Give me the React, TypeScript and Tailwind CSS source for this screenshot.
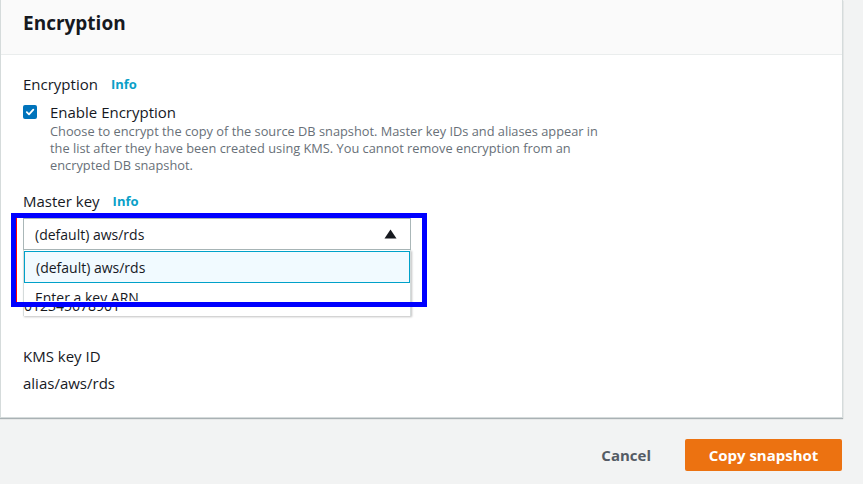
import React from "react";

const font = { fontFamily: '"Open Sans", "Noto Sans", sans-serif' };

function Check() {
  return (
    <span className="flex h-[14px] w-[14px] items-center justify-center rounded-[2px] bg-[#0073bb]">
      <svg width="10" height="10" viewBox="0 0 10 10">
        <path d="M1.8 5.2 L4 7.3 L8.3 2.6" fill="none" stroke="#fff" strokeWidth="1.8" strokeLinecap="round" strokeLinejoin="round" />
      </svg>
    </span>
  );
}

export default function App() {
  return (
    <div className="relative h-[484px] w-[863px] overflow-hidden bg-[#f2f3f3] text-[#16191f]" style={font}>
      <div className="w-[843px] border-x border-b border-[#d5dbdb] bg-white shadow-[0_1px_1px_rgba(0,28,36,0.3)]">
        <div className="flex h-[55px] items-start border-b border-[#eaeded] bg-[#fafafa] pl-[22px] pt-[9px]">
          <h2 className="text-[19px] font-bold leading-[28px]">Encryption</h2>
        </div>
        <div className="pl-[22px] pb-[24px]">
          <div className="mt-[19px] flex items-center gap-[13px] text-[15px] leading-[20px]">
            <span>Encryption</span>
            <span className="text-[13px] font-bold text-[#0aa0c8]">Info</span>
          </div>
          <div className="mt-[8px] flex items-center gap-[13px] text-[15px] leading-[20px]">
            <Check />
            <span>Enable Encryption</span>
          </div>
          <div className="mt-[1px] w-[585px] pl-[27px] text-[12.8px] leading-[17px] text-[#687078]">
            Choose to encrypt the copy of the source DB snapshot. Master key IDs and aliases appear in the list after they have been created using KMS. You cannot remove encryption from an encrypted DB snapshot.
          </div>
          <div className="mt-[17px] flex items-center gap-[13px] text-[15px] leading-[20px]">
            <span>Master key</span>
            <span className="text-[13px] font-bold text-[#0aa0c8]">Info</span>
          </div>
          <div className="relative mt-[7px] w-[388px]">
            <div className="flex h-[32px] items-center justify-between border border-[#aab7b8] bg-white pl-[11px] pr-[13px] text-[14px]">
              <span>(default) aws/rds</span>
              <svg width="13" height="10" viewBox="0 0 13 10">
                <path d="M6.5 0.5 L12.5 9.5 L0.5 9.5 Z" fill="#16191f" />
              </svg>
            </div>
            <div className="absolute left-0 top-[32px] z-10 w-[388px] border-x border-[#d5dbdb] bg-white shadow-[1px_1px_2px_rgba(0,0,0,0.25)]">
              <div className="mt-[1px] flex h-[32px] items-center border border-[#00a1c9] bg-[#f1faff] pl-[11px] text-[14px]">
                (default) aws/rds
              </div>
              <div className="h-[18px] overflow-hidden pl-[11px] pt-[5px] text-[14px] leading-[20px]">
                Enter a key ARN
              </div>
              <div className="mt-[5px] h-[10px] overflow-hidden text-[14px] leading-[20px]">
                <div className="-mt-[10px]">012345678901</div>
              </div>
            </div>
          </div>
          <div className="mt-[96px] text-[15px] leading-[20px]">KMS key ID</div>
          <div className="mt-[7px] text-[15px] leading-[20px]">alias/aws/rds</div>
        </div>
      </div>
      <div className="mt-[21px] flex items-center justify-end gap-[34px] pr-[21px]">
        <span className="text-[15px] font-bold text-[#545b64]">Cancel</span>
        <div className="flex h-[32px] w-[157px] items-center justify-center rounded-[2px] bg-[#ec7211] text-[15px] font-bold text-white">
          Copy snapshot
        </div>
      </div>
      <div className="pointer-events-none absolute left-[11px] top-[213px] z-20 h-[94px] w-[416px] border-[5px] border-[#0000ff] shadow-[inset_1px_0_0_#ff0000]" />
    </div>
  );
}
